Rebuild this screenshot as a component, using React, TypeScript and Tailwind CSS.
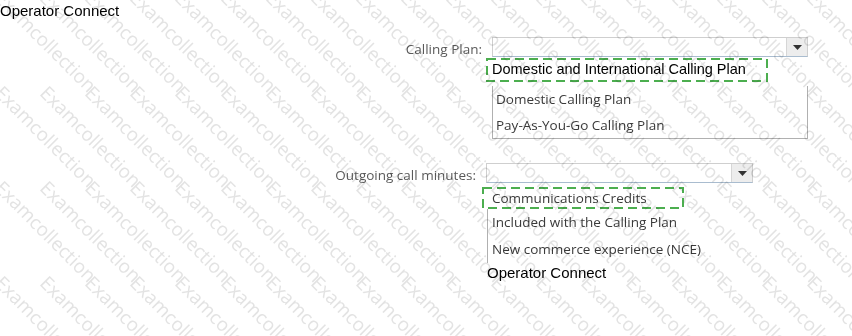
import React from 'react';

const ui = "font-['Open_Sans',sans-serif]";
const arial = "font-['Liberation_Sans',Arial,sans-serif]";

function Select({ width }: { width: string }) {
  return (
    <div className={`${width} h-[20px] flex border border-[#cfcfcf] border-b-[#a9bccf] bg-white`}>
      <div className="flex-1" />
      <div className="w-[21px] h-full flex items-center justify-center bg-[#ededed] border-l border-[#d6d6d6]">
        <svg width="9" height="5" viewBox="0 0 9 5">
          <polygon points="0,0 9,0 4.5,5" fill="#333" />
        </svg>
      </div>
    </div>
  );
}

// green dashed answer frame, drawn so the dash length matches the picture
function Answer({ className, children }: { className: string; children: React.ReactNode }) {
  return (
    <div className={`relative flex items-center ${className}`}>
      <svg className="absolute inset-0 w-full h-full pointer-events-none overflow-visible">
        <rect
          x="1"
          y="1"
          width="calc(100% - 2px)"
          height="calc(100% - 2px)"
          fill="none"
          stroke="#4cae4f"
          strokeWidth="2"
          strokeDasharray="9 5"
        />
      </svg>
      {children}
    </div>
  );
}

function Watermark() {
  const marks: { x: number; y: number }[] = [];
  for (let r = -2; r < 3; r++) {
    for (let c = 0; c < 20; c++) {
      marks.push({ x: 5 + c * 45.1, y: 178 + r * 95 });
    }
  }
  return (
    <div className="absolute inset-0 overflow-hidden pointer-events-none mix-blend-multiply">
      {marks.map((m, i) => (
        <span
          key={i}
          className={`absolute ${ui} text-[19px] leading-none text-[#e3e3e3] whitespace-nowrap origin-top-left rotate-45`}
          style={{ left: m.x, top: m.y }}
        >
          Examcollection
        </span>
      ))}
    </div>
  );
}

export default function App() {
  return (
    <div className="relative w-[852px] h-[336px] bg-white overflow-hidden">
      <div className={`${arial} text-[15px] leading-[22px] text-black`}>Operator Connect</div>

      <div className="flex gap-[10px] mt-[15px]">
        <div className={`w-[482px] text-right ${ui} text-[13.5px] leading-[20px] text-[#5a5a5a] mt-[2px]`}>
          Calling Plan:
        </div>
        <div className="w-[316px]">
          <Select width="w-[316px]" />
          <Answer className="-ml-[6px] mt-[1px] w-[282px] h-[24px] pl-[6px]">
            <span className={`${arial} text-[14.5px] text-black`}>Domestic and International Calling Plan</span>
          </Answer>
          <div className={`mt-[4px] border border-t-0 border-[#b0b0b0] ${ui} text-[13.5px] text-[#3a3a3a]`}>
            <div className="h-[26px] flex items-center pl-[3px]">Domestic Calling Plan</div>
            <div className="h-[26px] flex items-center pl-[3px]">Pay-As-You-Go Calling Plan</div>
          </div>
        </div>
      </div>

      <div className="flex gap-[10px] mt-[24px]">
        <div className={`w-[476px] text-right ${ui} text-[13.5px] leading-[20px] text-[#5a5a5a] mt-[2px]`}>
          Outgoing call minutes:
        </div>
        <div className="w-[267px]">
          <Select width="w-[267px]" />
          <Answer className={`-ml-[4px] mt-[4px] w-[202px] h-[22px] pl-[10px] ${ui} text-[13.5px] text-[#3a3a3a]`}>
            Communications Credits
          </Answer>
          <div className={`ml-[1px] border-l border-[#b0b0b0] ${ui} text-[13.5px] text-[#3a3a3a]`}>
            <div className="h-[27px] flex items-center pl-[4px]">Included with the Calling Plan</div>
            <div className="h-[27px] flex items-center pl-[4px]">New commerce experience (NCE)</div>
          </div>
          <div className={`${arial} text-[15px] leading-[20px] text-black ml-[1px]`}>Operator Connect</div>
        </div>
      </div>

      <Watermark />
    </div>
  );
}
